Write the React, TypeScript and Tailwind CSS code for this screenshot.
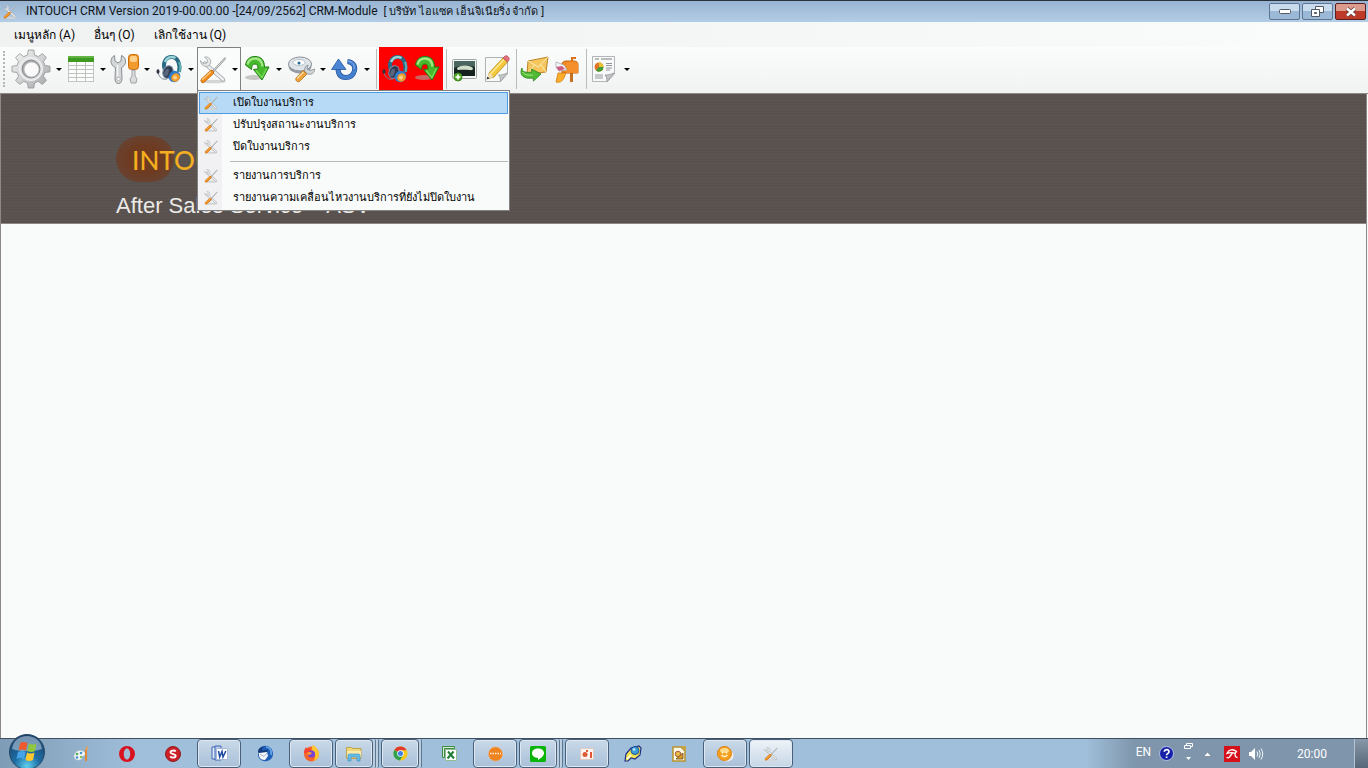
import React, { ReactNode } from 'react'

interface IconProps {
  size?: number
}

interface TaskItem {
  name: string
  icon: ReactNode
  open?: boolean
  active?: boolean
  stack?: number
}

/* ---------- toolbar icons ---------- */

const GearIcon = () => (
  <svg width="40" height="40" viewBox="0 0 40 40">
    <defs>
      <linearGradient id="gear" x1="0" y1="0" x2="1" y2="1">
        <stop offset="0" stopColor="#f4f4f4" />
        <stop offset="0.5" stopColor="#d0d2d3" />
        <stop offset="1" stopColor="#a0a3a4" />
      </linearGradient>
    </defs>
    <g fill="url(#gear)" stroke="#929596" strokeWidth="0.8" strokeLinejoin="round">
      <path d="M16.5 6 17.2 1h5.6l.7 5 3.8 1.6 4.1-3 4 4-3 4.1L34 16.5l5 .7v5.6l-5 .7-1.6 3.8 3 4.1-4 4-4.1-3-3.8 1.6-.7 5h-5.6l-.7-5-3.8-1.6-4.1 3-4-4 3-4.1L6 23.5l-5-.7v-5.6l5-.7 1.6-3.8-3-4.1 4-4 4.1 3z" />
      <circle cx="20" cy="20" r="11.5" fill="#e3e5e6" stroke="#f8f8f8" />
      <circle cx="20" cy="20" r="9" fill="#a5a8aa" stroke="#7d8082" />
      <circle cx="20.500" cy="20.500" r="7.500" fill="#fafafa" stroke="#b5b8ba" />
    </g>
  </svg>
)

const TableIcon = () => (
  <svg width="32" height="32" viewBox="0 0 32 32">
    <rect x="3.500" y="3.500" width="25" height="25" fill="#fdfdfd" stroke="#c2c6c2" />
    <rect x="3" y="3" width="26" height="6" fill="#3f9a22" />
    <rect x="3" y="3" width="26" height="2" fill="#62b544" />
    <path d="M3 12.500h26M3 16.500h26M3 20.500h26M3 24.500h26M11.500 9v20M20.500 9v20" stroke="#bec3be" />
  </svg>
)

const WrenchDriverIcon = () => (
  <svg width="32" height="32" viewBox="0 0 32 32">
    <path
      d="M5.500 2.500 6 8l3 2 3-2 .5-5.500c3 1 4.500 4 4 7-.4 2.500-2 4-4 5l.5 11c0 3-1.200 5-3.500 5S6 28.500 6 26l.5-11.500C4 13.500 2 11.500 2 8.500c0-2.700 1.200-5 3.500-6z"
      fill="#d4d7d9"
      stroke="#8b8e90"
    />
    <circle cx="9.500" cy="26" r="1.700" fill="#fff" stroke="#999" strokeWidth="0.6" />
    <path d="M8.500 12v11" stroke="#f6f6f6" strokeWidth="1.500" />
    <rect x="19.500" y="1.500" width="10" height="15" rx="3" fill="#f39a2c" stroke="#c96c0c" />
    <rect x="21" y="3" width="7" height="6" rx="2" fill="#fdd08c" />
    <path d="M23 17h3v6l2 3-1 4h-5l-1-4 2-3z" fill="#d9dbdc" stroke="#909394" strokeWidth="0.8" />
  </svg>
)

const HeadsetIcon = () => (
  <svg width="32" height="32" viewBox="0 0 32 32">
    <path d="M11.500 16C9.500 8 14 3.500 19 4c6 .6 8.500 7 7 15" fill="none" stroke="#2a6a86" strokeWidth="4" />
    <path d="M12 9c2-5 6.500-6 10.500-4" fill="none" stroke="#9ad3d6" strokeWidth="2.500" />
    <path d="M26 9c1.500 3 1.500 7 .5 10" fill="none" stroke="#5fb0b0" strokeWidth="2" />
    <ellipse cx="15" cy="19" rx="5" ry="6.500" fill="#303b52" stroke="#7c90aa" transform="rotate(20 15 19)" />
    <ellipse cx="13.500" cy="19.500" rx="2" ry="4" fill="#59677e" transform="rotate(20 13.500 19.500)" />
    <path d="M5 19c1 6 5 8 9 7" fill="none" stroke="#7c8792" />
    <ellipse cx="5" cy="18.500" rx="1.500" ry="2.300" fill="#2b333d" />
    <ellipse cx="21.500" cy="23.500" rx="6" ry="5.500" fill="#2a7ccf" transform="rotate(-35 21.500 23.500)" />
    <ellipse cx="22.500" cy="24.500" rx="4.500" ry="4" fill="#f29b2b" transform="rotate(-35 22.500 24.500)" />
    <circle cx="22" cy="24.500" r="2" fill="#fbd28a" />
  </svg>
)

const ToolsIcon = ({ size = 32 }: IconProps) => (
  <svg width={size} height={size} viewBox="0 0 32 32" strokeLinecap="round">
    <ellipse cx="17" cy="27.500" rx="12" ry="1.800" fill="#d3d5d5" />
    <path d="M8 9.500 26 25.500" stroke="#a0a4a6" strokeWidth="4.200" />
    <path d="M8 9.500 26 25.500" stroke="#eceeef" strokeWidth="2.600" />
    <path
      d="m3.500 7 3.500 3 3-1 .5-3-3-3c3-.6 5.700 1 6.200 3.800.4 3.200-1.700 5.700-4.700 5.700-3 0-5.500-2.500-5.500-5.500z"
      fill="#e6e9ea"
      stroke="#a0a4a6"
      strokeWidth="0.800"
    />
    <path d="M28 4.500 16 17.500" stroke="#9a9ea1" strokeWidth="2.200" />
    <path d="m28 4.500-12 13" stroke="#e1e4e5" strokeWidth="0.900" />
    <path d="M14.500 18.500 6 26.500" stroke="#b9640a" strokeWidth="5" />
    <path d="M14.500 18.500 6 26.500" stroke="#f08c1c" strokeWidth="3.800" />
    <path d="M13.500 18 5.500 25.500" stroke="#fdcb80" strokeWidth="1.200" />
  </svg>
)

const GreenArrowIcon = () => (
  <svg width="32" height="32" viewBox="0 0 32 32">
    <ellipse cx="13" cy="24.500" rx="9" ry="2.500" fill="#a6aaa6" opacity="0.600" />
    <path
      d="M4.500 12C5.500 6 9 3.500 14 3.500c6.500 0 9.500 4 9.500 10.500h4.500l-7 13-8.500-10.500 4.500-.5c0-3.500-1-5-3-5-2.500 0-3.500 2-3.500 5.500z"
      fill="#46b92c"
      stroke="#237f16"
      strokeLinejoin="round"
    />
    <path d="M6.500 11.500c1-4 3.500-6 7.500-6 4.500 0 7 3 7.500 8" fill="none" stroke="#a0e884" strokeWidth="2.500" />
    <path d="m15 17.500 6 7 4.500-9" fill="none" stroke="#7bdc5a" strokeWidth="1.300" />
  </svg>
)

const DiscWrenchIcon = () => (
  <svg width="32" height="32" viewBox="0 0 32 32">
    <ellipse cx="15" cy="13" rx="11.500" ry="7.500" fill="#969da5" />
    <ellipse cx="15" cy="11" rx="11.500" ry="7" fill="#dfe4e9" stroke="#8b929b" />
    <ellipse cx="14" cy="9.500" rx="6" ry="3" fill="#fff" stroke="#b6c2cc" />
    <circle cx="14" cy="10" r="1.500" fill="#25688d" />
    <path d="m23 12-1 4 3 1.500 4.500-1.500c.5 4-3 6-7 5l-3-3c0-3 1-5.500 3.500-6z" fill="#d0d5d9" stroke="#878c91" strokeWidth="0.800" />
    <path d="m18 17.500 4 3.500-7.500 7.500c-2 1-4.500-1-3.500-3.500z" fill="#f0a33b" stroke="#b56f18" strokeWidth="0.800" />
    <path d="m18.500 19-6.500 6.500" stroke="#fde0ac" strokeWidth="1.300" />
  </svg>
)

const RefreshIcon = () => (
  <svg width="32" height="32" viewBox="0 0 32 32">
    <path d="M18.500 8.500C24 9 26.500 13 25.500 17.500 24.500 22 21 24.500 16.500 24.500S9 21.500 9 15" fill="none" stroke="#27559f" strokeWidth="5" />
    <path d="M18.500 8.500C24 9 26.500 13 25.500 17.500 24.500 22 21 24.500 16.500 24.500S9 21.500 9 15" fill="none" stroke="#447fce" strokeWidth="3.600" />
    <path d="M9.500 6 17 16.500H2.500z" fill="#4a86d3" stroke="#27559f" strokeWidth="0.800" strokeLinejoin="round" />
    <path d="M19 8c4.500.5 7 4 6 8" fill="none" stroke="#8ab5ee" />
  </svg>
)

const PictureIcon = () => (
  <svg width="32" height="32" viewBox="0 0 32 32">
    <rect x="3.500" y="6.500" width="24" height="19" rx="1" fill="#f4f6f5" stroke="#a2a6a5" />
    <rect x="5" y="8" width="21" height="15" fill="#1c2b2a" />
    <path d="M5 8h21v6c-6-2-14-2-21 1z" fill="#4b6660" />
    <ellipse cx="16" cy="15.500" rx="8" ry="3" fill="#cfdcc8" />
    <path d="M5 18c6-2 15-1 21 0v5H5z" fill="#14211f" />
    <circle cx="9" cy="24" r="4" fill="#55aa2b" stroke="#3c861c" />
    <path d="M9 21.500v5M6.500 24h5" stroke="#fff" strokeWidth="1.600" />
  </svg>
)

const EditIcon = () => (
  <svg width="32" height="32" viewBox="0 0 32 32">
    <path d="M4.500 4.500h22V21l-7 7.500h-15z" fill="#f7f8f8" stroke="#b0b3b5" />
    <path d="m26 20-6.500 8.500c0-3-.5-5-2-6.500 3 0 6-.5 8.500-2z" fill="#c7cacc" stroke="#8f9395" strokeWidth="0.700" />
    <path d="m8 20 14-15 4.500 4L13 24l-6 1.500z" fill="#f4c83a" stroke="#b88c18" strokeWidth="0.800" />
    <path d="M10 20.500 23 6.500" stroke="#fdeb9a" strokeWidth="1.500" />
    <path d="m22 5 2-2c2-1 5 1.500 4 4l-1.500 2z" fill="#e2717b" stroke="#b54e58" strokeWidth="0.700" />
    <path d="m8 20-2 6 6-2c-.5-2-2-3.500-4-4z" fill="#f5deb4" />
    <path d="m6.500 23.500-1 3 3-1z" fill="#333" />
  </svg>
)

const SendMailIcon = () => (
  <svg width="32" height="32" viewBox="0 0 32 32">
    <path d="m9 8 20-4-2 15-19 2z" fill="#f5c65e" stroke="#b98424" strokeLinejoin="round" />
    <path d="m9 8 10.500 6L29 4M8 21l7.500-9M27 19l-5.500-8" fill="none" stroke="#fdebb3" />
    <path
      d="M3 15c0 4 4 5 10 4l-.5-3L22 21l-7.500 7-.5-3c-7 1-12-1-12-6 0-1.500.3-3 1-4z"
      fill="#52bb34"
      stroke="#27831a"
      strokeWidth="0.800"
    />
    <path d="M3.500 19c2 3 6 3.500 10.500 3" fill="none" stroke="#a9ea8e" />
  </svg>
)

const MailboxIcon = () => (
  <svg width="32" height="32" viewBox="0 0 32 32">
    <path d="M19 18h3v11h-3z" fill="#c47221" />
    <path d="M21 12V5h4" fill="none" stroke="#d97316" strokeWidth="2" />
    <path d="M11 11c0-2 2-3 5-3h7c3 0 4 2 4 4v8H11z" fill="#f08b23" stroke="#c0600e" />
    <path d="M15 20v-8c0-2 1.500-3.500 4-3.500h4c3 0 4 2 4 4V20z" fill="#f58f2c" />
    <path d="m5 9 8 3 3 5-8 1-3-4z" fill="#f4f5f8" stroke="#a6a8b3" strokeWidth="0.800" />
    <path d="m5 14 6-1 3 3-6 2z" fill="#cb5d82" />
    <path d="M7 20h8l-2 5c-2 4-5 5-8 4z" fill="#fbae2b" stroke="#d47f10" strokeWidth="0.800" />
  </svg>
)

const ReportIcon = () => (
  <svg width="32" height="32" viewBox="0 0 32 32">
    <path d="M3.500 3.500h22V21l-7 7.500h-15z" fill="#f8f9f9" stroke="#b3b6b8" />
    <path d="M6 6h4M12 6h11" stroke="#b8bcbd" strokeWidth="2" />
    <circle cx="10" cy="14" r="4.500" fill="#e0752a" />
    <path d="M10 14V9.500a4.500 4.500 0 0 1 4.500 4.500z" fill="#e9c22e" />
    <path d="M10 14h4.500A4.500 4.500 0 0 1 7 17.500z" fill="#3f9e3a" />
    <path d="M17 10.500h6M17 12.500h6M17 15h6M17 17h4" stroke="#8f9496" />
    <path d="M6 21h8v5H6z" fill="#c6cacc" />
    <path d="m25 20-7 8.500c0-3-.5-5-2-6.500 3 0 6-.5 9-2z" fill="#c3c6c8" stroke="#85898b" strokeWidth="0.700" />
  </svg>
)

const Caret = () => (
  <span className="flex w-3 justify-center">
    <svg width="6" height="3" viewBox="0 0 6 3">
      <path d="M0 0h6L3 3z" fill="#000" />
    </svg>
  </span>
)

/* ---------- task bar icons ---------- */

const StartOrb = () => (
  <svg width="38" height="38" viewBox="0 0 38 38">
    <defs>
      <radialGradient id="orb" cx="0.500" cy="0.900" r="0.900">
        <stop offset="0" stopColor="#5fd0ee" />
        <stop offset="0.400" stopColor="#1f6ea6" />
        <stop offset="1" stopColor="#1b3f66" />
      </radialGradient>
    </defs>
    <circle cx="19" cy="19" r="17.500" fill="url(#orb)" stroke="#274766" />
    <path d="M4 16C5 8 11 3 19 3s14 5 15 13c-9 3-21 3-30 0z" fill="#cfe2f0" opacity="0.500" />
    <path d="M12 10c2.500-1.500 5-1.500 7.500 0L18 17.500c-2.500-1.300-5-1.300-7.500 0z" fill="#ee5a2b" />
    <path d="M21 10.500c2.500 1.300 5 1.300 7.500 0L27 18c-2.500 1.300-5 1.300-7.500 0z" fill="#8fc73e" />
    <path d="M10 19c2.500-1.300 5-1.300 7.500 0L16 26c-2.500-1.300-5-1.300-7.500 0z" fill="#47a3e8" />
    <path d="M19 19.500c2.500 1.300 5 1.300 7.500 0L25 27c-2.500 1.300-5 1.300-7.500 0z" fill="#fbc82e" />
  </svg>
)

const PaintIcon = () => (
  <svg width="16" height="16" viewBox="0 0 16 16">
    <path d="M1 9c1-4 6-6 9-4 3 1 3 4 1 5-2 0-2 1-2 3-2 2-9 2-8-4z" fill="#f2f6f6" stroke="#8fb0c0" strokeWidth="0.600" />
    <circle cx="4" cy="8" r="1.300" fill="#53a857" />
    <circle cx="8" cy="7" r="1.300" fill="#4a8fd0" />
    <circle cx="4" cy="11.500" r="1.300" fill="#4a8fd0" />
    <circle cx="8" cy="11" r="1.200" fill="#8cc152" />
    <path d="M13 4v11" stroke="#dd8a33" strokeWidth="2" />
    <path d="M12 4c0-2 1-3 3-4 0 2 0 3-1 4z" fill="#e0a15c" />
  </svg>
)

const OperaIcon = () => (
  <svg width="16" height="16" viewBox="0 0 16 16">
    <path fillRule="evenodd" d="M8 0a8 8 0 1 0 0 16A8 8 0 0 0 8 0zm0 2.500c2 0 3.200 2.500 3.200 5.500S10 13.500 8 13.500 4.800 11 4.800 8 6 2.500 8 2.500z" fill="#d9121f" />
  </svg>
)

const SIcon = () => (
  <svg width="16" height="16" viewBox="0 0 16 16">
    <circle cx="8" cy="8" r="7.500" fill="#cb2027" stroke="#8f1a1e" />
    <path d="M10.800 5.500C9.500 4 5.500 4.200 5.500 6.300c0 2.200 5.200 1.200 5.200 3.500 0 2.200-4 2.300-5.500.5" fill="none" stroke="#fff" strokeWidth="1.800" />
  </svg>
)

const WordIcon = () => (
  <svg width="17" height="17" viewBox="0 0 17 17">
    <path d="M1 2h6v12H1z" fill="#dce7f8" stroke="#3e67b4" />
    <path d="M4 1h6v14H4z" fill="#b6cbed" stroke="#3e67b4" />
    <path d="M5.500 3.500h11v11h-11z" fill="#fff" stroke="#a9b9d7" />
    <path d="m7.500 6 1.200 6 2.300-5.500 1 5.500 2.800-6" fill="none" stroke="#1d4aa3" strokeWidth="1.500" />
  </svg>
)

const ThunderbirdIcon = () => (
  <svg width="17" height="17" viewBox="0 0 17 17">
    <path d="M4 2c5-3 12 0 12 7 0 5-5 8-9 7-4-.5-6-3-6-7l2-1z" fill="#1f5fb8" />
    <path d="M1 7c0-3 2-5 5-5L4.500 6 11 4.500 9 9 4 12z" fill="#123a7c" />
    <path d="m2 8 8-1 1 4-3 4c-3 0-5-1-6-4z" fill="#f5f7fa" />
    <path d="m3 9 4 2.500L10 8" fill="none" stroke="#9fb4cb" />
    <path d="M9 2c4 0 6 4 5 8" fill="none" stroke="#69aee8" strokeWidth="1.500" />
  </svg>
)

const FirefoxIcon = () => (
  <svg width="17" height="17" viewBox="0 0 17 17">
    <circle cx="8.500" cy="9" r="7.500" fill="#f4632a" />
    <path d="M10 0c3 2 6 5 6 9a7.500 7.500 0 0 1-6 7c3-3 3-8 0-10-2-1.500-1-4 0-6z" fill="#fdc62e" />
    <path d="M1 8c0-3 1-4 2-6l1 2c2-1 3 0 4 1L5 8z" fill="#f9432f" />
    <circle cx="8.500" cy="9" r="3.500" fill="#7542d8" />
    <path d="M4 7.500c2-1 3-.5 5 .5-1 1.500-2 1.500-4 2z" fill="#ff9a2e" />
  </svg>
)

const FolderIcon = () => (
  <svg width="18" height="17" viewBox="0 0 18 17">
    <path d="M1.500 2.500h5l1.500 1h8v10h-14.500z" fill="#efd778" stroke="#c0a24a" />
    <path d="M2 6h14v6H2z" fill="#f9ebab" />
    <path d="M3 16V10.500c0-1 .6-1.500 1.500-1.500h9c.9 0 1.500.5 1.500 1.500V16h-3v-4H6v4z" fill="#65bde8" stroke="#3f92c2" strokeWidth="0.700" />
  </svg>
)

const ChromeIcon = () => (
  <svg width="15" height="15" viewBox="0 0 16 16">
    <circle cx="8" cy="8" r="7.500" fill="#f8c81c" />
    <path d="M8 8 1.500 4.200A7.500 7.500 0 0 1 14.600 4.500H8z" fill="#e23b2e" />
    <path d="M1.500 4.200A7.500 7.500 0 0 0 7.300 15.500L11 9.700 8 8z" fill="#2fa14f" />
    <circle cx="8" cy="8" r="3.500" fill="#fff" />
    <circle cx="8" cy="8" r="2.700" fill="#3f7de8" />
  </svg>
)

const ExcelIcon = () => (
  <svg width="17" height="17" viewBox="0 0 17 17">
    <path d="M1.500 1.500h12v2h-10v9h-2z" fill="#d7ead3" stroke="#3d8b45" />
    <path d="M4.500 4.500h11v11h-11z" fill="#fff" stroke="#8fbf92" />
    <path d="m7 6.500 6 7M12.500 6.500l-6 7" stroke="#217d35" strokeWidth="2" />
  </svg>
)

const OrangeIcon = () => (
  <svg width="17" height="16" viewBox="0 0 17 16">
    <circle cx="8.500" cy="8" r="7" fill="#ee8420" stroke="#f6b06a" strokeDasharray="2 1.500" />
    <path d="M3 7.500h11" stroke="#fff0d9" strokeDasharray="1.500 1" strokeWidth="1.500" />
  </svg>
)

const LineIcon = () => (
  <svg width="16" height="16" viewBox="0 0 16 16">
    <rect width="16" height="16" rx="1.500" fill="#09b509" />
    <path d="M8 2.500c3.500 0 6 2 6 4.700 0 2.500-3 5-6 6.800v-2.300c-3.500 0-6-1.900-6-4.500 0-2.700 2.500-4.700 6-4.700z" fill="#fff" />
  </svg>
)

const SlideIcon = () => (
  <svg width="16" height="15" viewBox="0 0 16 15">
    <path d="M1.500 2.500h13v11h-13z" fill="#fbf5f2" stroke="#e2c9c0" />
    <circle cx="6" cy="8.500" r="2.500" fill="#dc5a35" />
    <path d="M8 4v2M12 6v6" stroke="#dc5a35" strokeWidth="2" />
  </svg>
)

const RocketIcon = () => (
  <svg width="18" height="17" viewBox="0 0 18 17">
    <path d="M1 16 2 9l5-6 8-2 2 2-1 7-5 4-4-1-3 3z" fill="#f2e24b" stroke="#1e2d8c" strokeWidth="1.200" />
    <circle cx="11" cy="5.500" r="4" fill="#399fd6" stroke="#1e4f9c" />
    <circle cx="10" cy="4.500" r="1.300" fill="#c9ecff" />
    <path d="m3 14 4-4" stroke="#fffbd0" strokeWidth="2" />
  </svg>
)

const DrawIcon = () => (
  <svg width="15" height="16" viewBox="0 0 15 16">
    <path d="M1 1h8l4 4v10H1z" fill="#fdf9e8" stroke="#b9922a" strokeWidth="1.500" />
    <path d="M9 0h5v5z" fill="#caa43c" />
    <circle cx="6" cy="8" r="2.800" fill="#e7ba4c" stroke="#9a4022" strokeWidth="0.800" />
    <path d="m4 13 7-6v6z" fill="#dd9c2c" stroke="#6a4a12" strokeWidth="0.800" />
  </svg>
)

const BallIcon = () => (
  <svg width="17" height="16" viewBox="0 0 17 16">
    <ellipse cx="9.500" cy="9.500" rx="7" ry="6" fill="#f3f0ea" />
    <circle cx="7.500" cy="7.500" r="7" fill="#f5a01f" stroke="#dc7f0e" />
    <ellipse cx="7.500" cy="4.500" rx="4.500" ry="2.500" fill="#fcd98b" />
    <path d="M4.500 9c1.500 2 4.500 2 6 0M5.500 5.500v2M9.500 5.500v2" fill="none" stroke="#fff5d4" strokeWidth="1.300" />
  </svg>
)

/* ---------- data ---------- */

const menus: string[] = ['เมนูหลัก (A)', 'อื่นๆ (O)', 'เลิกใช้งาน (Q)']

const serviceMenu: string[][] = [
  ['เปิดใบงานบริการ', 'ปรับปรุงสถานะงานบริการ', 'ปิดใบงานบริการ'],
  ['รายงานการบริการ', 'รายงานความเคลื่อนไหวงานบริการที่ยังไม่ปิดใบงาน'],
]

const tasks: TaskItem[] = [
  { name: 'Paint', icon: <PaintIcon /> },
  { name: 'Opera', icon: <OperaIcon /> },
  { name: 'S', icon: <SIcon /> },
  { name: 'Word', icon: <WordIcon />, open: true },
  { name: 'Thunderbird', icon: <ThunderbirdIcon /> },
  { name: 'Firefox', icon: <FirefoxIcon />, open: true },
  { name: 'Explorer', icon: <FolderIcon />, open: true, stack: 2 },
  { name: 'Chrome', icon: <ChromeIcon />, open: true, stack: 1 },
  { name: 'Excel', icon: <ExcelIcon /> },
  { name: 'Support', icon: <OrangeIcon />, open: true },
  { name: 'LINE', icon: <LineIcon />, open: true, stack: 2 },
  { name: 'Slides', icon: <SlideIcon />, open: true },
  { name: 'Rocket', icon: <RocketIcon /> },
  { name: 'Draw', icon: <DrawIcon /> },
  { name: 'Messenger', icon: <BallIcon />, open: true },
  { name: 'INTOUCH CRM', icon: <ToolsIcon size={16} />, open: true, active: true },
]

/* ---------- parts ---------- */

const TitleBar = () => (
  <header className="flex h-[22px] flex-none items-center border-t border-[#2b3138] bg-linear-to-b from-[#98b4d2] to-[#b4cde6] pl-0.5">
    <ToolsIcon size={16} />
    <h1 className="flex-1 whitespace-pre pl-2 text-[12px] leading-5 text-[#101418]">
      INTOUCH CRM Version 2019-00.00.00 -[24/09/2562] CRM-Module{'  '}
      <span className="text-[11px]">[ บริษัท ไอแซค เอ็นจิเนียริ่ง จำกัด ]</span>
    </h1>
    <div className="flex gap-0.5 pr-0.5">
      <button aria-label="Minimize" className="flex h-[17px] w-[31px] items-center justify-center rounded-xs border border-[#5d7590] bg-linear-to-b from-[#c9dcee] from-50% to-[#9bb9d6] to-50%">
        <svg width="12" height="5" viewBox="0 0 12 5">
          <rect x="0.500" y="0.500" width="11" height="4" rx="1" fill="#fff" stroke="#535a66" />
        </svg>
      </button>
      <button aria-label="Restore" className="flex h-[17px] w-[31px] items-center justify-center rounded-xs border border-[#5d7590] bg-linear-to-b from-[#c9dcee] from-50% to-[#9bb9d6] to-50%">
        <svg width="13" height="11" viewBox="0 0 13 11">
          <path d="M4.500.5h8v6h-8z" fill="#fff" stroke="#535a66" />
          <path d="M.5 3.500h8v7h-8z" fill="#fff" stroke="#535a66" />
          <path d="M3.500 6.500h2v1h-2z" fill="#9bb9d6" stroke="#535a66" />
        </svg>
      </button>
      <button aria-label="Close" className="flex h-[17px] w-[31px] items-center justify-center rounded-xs border border-[#5c1f1f] bg-linear-to-b from-[#dc9a8c] from-50% to-[#bd3a28] to-50%">
        <svg width="12" height="10" viewBox="0 0 12 10">
          <path d="m2 1.500 8 7M10 1.500l-8 7" stroke="#5a3a3e" strokeWidth="4" />
          <path d="m2 1.500 8 7M10 1.500l-8 7" stroke="#fff" strokeWidth="2.400" />
        </svg>
      </button>
    </div>
  </header>
)

const ServiceMenu = () => (
  <div role="menu" className="absolute -left-px top-[42px] z-10 w-[313px] border border-[#808080] bg-linear-to-r from-[#f1f1f3] from-[24px] to-[#f8fbf9] to-[24px] p-px text-[11px] text-black">
    {serviceMenu.map((group, g) => (
      <div key={g} className={g > 0 ? 'pt-[3px]' : ''}>
        {g > 0 && <hr className="mb-[3px] ml-[31px] border-[#b4b8b6]" />}
        {group.map((label, i) => (
          <button
            key={label}
            role="menuitem"
            className={`flex h-[22px] w-full items-center whitespace-nowrap border pl-[3px] ${g === 0 && i === 0 ? 'border-[#4d9be0] bg-[#b7daf7]' : 'border-transparent'}`}
          >
            <ToolsIcon size={16} />
            <span className="pl-[14px]">{label}</span>
          </button>
        ))}
      </div>
    ))}
  </div>
)

const ToolButton = ({ label, children }: { label: string; children: ReactNode }) => (
  <button aria-label={label} className="flex h-11 w-11 items-center">
    {children}
    <Caret />
  </button>
)

const Divider = () => <span className="ml-[3px] mr-0.5 h-10 w-px bg-[#b9bcbd]" />

const Toolbar = () => (
  <div className="flex h-[47px] flex-none items-start border-b border-[#8b8886] bg-linear-to-b from-[#fbfcfc] to-[#f1f2f2] pl-[3px]">
    <span className="mt-1 h-9 w-1 border-l-2 border-dotted border-[#b3b5b6]" />
    <button aria-label="Settings" className="flex h-11 w-[58px] items-center justify-between pl-1">
      <GearIcon />
      <Caret />
    </button>
    <ToolButton label="Table"><TableIcon /></ToolButton>
    <ToolButton label="Tools"><WrenchDriverIcon /></ToolButton>
    <ToolButton label="Call center"><HeadsetIcon /></ToolButton>
    <div className="relative h-11 w-11 border border-b-0 border-[#808080] bg-[#fafbfb]">
      <button aria-label="Service" className="-ml-px flex h-[43px] w-11 items-center">
        <ToolsIcon />
        <Caret />
      </button>
      <ServiceMenu />
    </div>
    <ToolButton label="Forward"><GreenArrowIcon /></ToolButton>
    <ToolButton label="Disc"><DiscWrenchIcon /></ToolButton>
    <ToolButton label="Refresh"><RefreshIcon /></ToolButton>
    <div className="flex h-11 items-center">
      <Divider />
      <div className="flex h-[43px] items-center self-start bg-[#fe0000]">
        <button aria-label="Call"><HeadsetIcon /></button>
        <button aria-label="Next"><GreenArrowIcon /></button>
      </div>
      <Divider />
      <button aria-label="Picture"><PictureIcon /></button>
      <button aria-label="Edit"><EditIcon /></button>
      <Divider />
      <button aria-label="Send mail"><SendMailIcon /></button>
      <button aria-label="Mailbox"><MailboxIcon /></button>
      <Divider />
      <button aria-label="Report" className="flex items-center">
        <ReportIcon />
        <Caret />
      </button>
    </div>
  </div>
)

const TaskButton = ({ item }: { item: TaskItem }) => {
  if (!item.open) {
    return <button aria-label={item.name} className="flex h-7 w-11 items-center justify-center">{item.icon}</button>
  }
  return (
    <div className="flex h-[29px] w-11">
      <button
        aria-label={item.name}
        className={`flex items-center justify-center rounded-sm border border-[#4b6078] shadow-[inset_0_0_0_1px_#dce8f3] ${item.stack ? 'w-[38px]' : 'w-11'} ${item.active ? 'bg-linear-to-b from-[#eef3f8] to-[#c6d6e6]' : 'bg-linear-to-b from-[#c9d9e8] to-[#a9c0d8]'}`}
      >
        {item.icon}
      </button>
      {Array.from({ length: item.stack || 0 }).map((_, i) => (
        <span key={i} className="w-[3px] rounded-r-xs border-r border-[#5d7690] bg-[#bccfe1]" />
      ))}
    </div>
  )
}

const Taskbar = () => (
  <footer className="flex h-[30px] flex-none items-center border-t border-[#3f4f60] bg-linear-to-r from-[#7f9cb6] via-[#a0bfda] via-10% to-[#a0bfda]">
    <button aria-label="Start" className="-mb-2 -mt-3 ml-2 mr-[13px]">
      <StartOrb />
    </button>
    <nav className="flex items-center gap-0.5">
      {tasks.map(item => <TaskButton key={item.name} item={item} />)}
    </nav>
    <div className="ml-auto flex h-full items-center bg-linear-to-r from-[#a0bfda] to-[#7e95ab] to-[50px] pl-[50px] text-[12px] text-white">
      <button className="pb-1">EN</button>
      <button aria-label="Help" className="ml-2">
        <svg width="15" height="15" viewBox="0 0 15 15">
          <circle cx="7.500" cy="7.500" r="7" fill="#1420a8" stroke="#b9c4e8" />
          <path d="M5.300 5.800C5.300 3 10 3 10 5.800c0 1.700-2.400 1.500-2.400 3.400M7.600 10.500V12" fill="none" stroke="#fff" strokeWidth="1.700" />
        </svg>
      </button>
      <svg className="ml-2.5 mb-1" width="9" height="18" viewBox="0 0 9 18">
        <path d="M2.500 2.500v-2h6v3h-2M.5 2.500h6v3h-6z" fill="none" stroke="#fff" />
        <path d="M2 14h5l-2.500 3z" fill="#fff" />
      </svg>
      <button aria-label="Show hidden icons" className="ml-2.5">
        <svg width="9" height="6" viewBox="0 0 9 6">
          <path d="M.5 5.500h8L4.500 1z" fill="#fff" stroke="#5c7087" strokeWidth="0.600" />
        </svg>
      </button>
      <svg className="ml-3" width="16" height="16" viewBox="0 0 16 16">
        <rect width="16" height="16" fill="#d5101a" />
        <path d="M3 7.500C4.500 3.500 9 2.500 12.500 5.500l-1.500 2c-2-1-5-1-8 0zM8.500 7l-3 4c-.8 1.200-2.200 1.200-2.700 0M11 7.500c0 3 .7 4 2.500 4" fill="none" stroke="#fff" strokeWidth="1.300" />
      </svg>
      <svg className="ml-2" width="16" height="14" viewBox="0 0 16 14">
        <path d="M1 5h2l4-4v12L3 9H1z" fill="#fff" />
        <path d="M9 4.500q1.500 2.500 0 5M11 3q2.500 4 0 8M13 1.500q3.500 5.500 0 11" fill="none" stroke="#fff" strokeWidth="0.900" />
      </svg>
      <time className="ml-[33px] mr-[27px]">20:00</time>
      <button aria-label="Show desktop" className="h-full w-3.5 border-l border-[#b4c4d2] bg-linear-to-b from-[#8898a8] to-[#56687a]" />
    </div>
  </footer>
)

const App = () => {
  return (
    <div className="flex h-screen flex-col overflow-hidden bg-[#f8fbf9] font-['Roboto','Noto_Sans',sans-serif]">
      <TitleBar />
      <nav className="flex h-[25px] flex-none items-center gap-[19px] bg-linear-to-r from-[#f0f1f1] to-[#f9fcfa] pl-[14px] text-[12px] text-black">
        {menus.map(menu => <button key={menu}>{menu}</button>)}
      </nav>
      <Toolbar />
      <main className="mr-px flex flex-1 flex-col border-x border-[#8b8886]">
        <section className="h-[130px] border-b border-[#8b8886] bg-[#5a534f] bg-[repeating-linear-gradient(#5c5551_0_1px,#58514e_1px_3px)] pl-[115px] pt-[42px]">
          <div className="flex h-[46px] w-[58px] items-center rounded-full bg-radial from-[#6e3a20] from-40% to-[#62483c] pl-4 pt-0.5 font-['Lato',sans-serif] text-[26px] font-medium text-[#f4ae1f]">
            INTOUCH
          </div>
          <p className="pt-2 font-['Liberation_Sans',sans-serif] text-[22px] leading-8 text-[#eceae8]">After Sales Service – ASV</p>
        </section>
      </main>
      <Taskbar />
    </div>
  )
}

export default App
